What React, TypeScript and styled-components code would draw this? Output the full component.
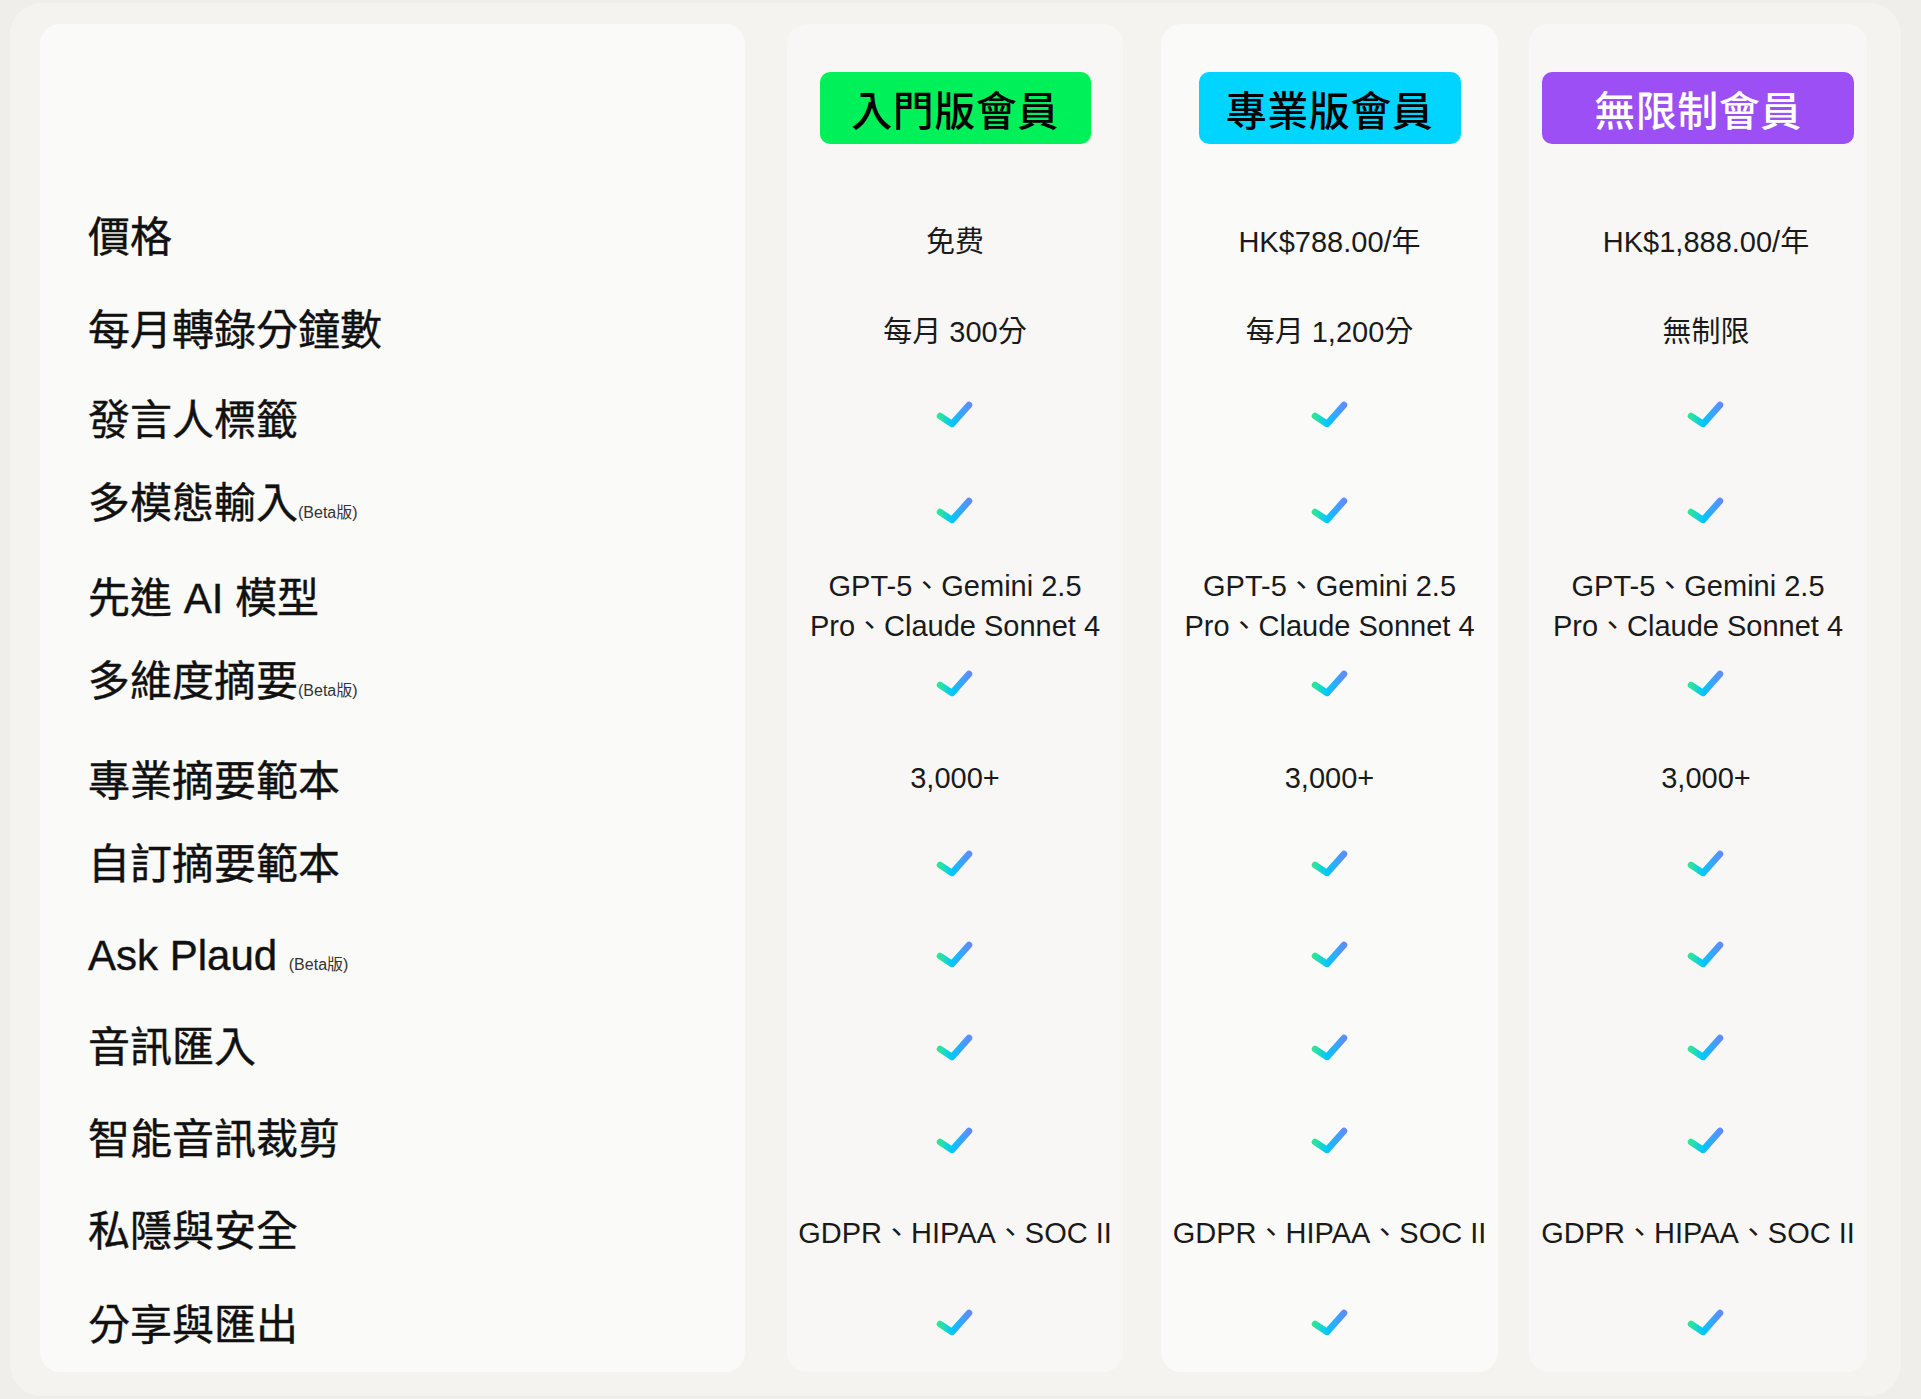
import { FC } from 'react'
import styled, { createGlobalStyle } from 'styled-components';

type Cell = 'check' | string | string[];

type Row = {
    label: string;
    beta?: 'tight' | 'spaced';
    labelHeight: number;
    labelNudge: number;
    valueHeight: number;
    valueNudge: number;
    values: [Cell, Cell, Cell];
};

const CHECK: Cell = 'check';
const AI: Cell = ['GPT-5、Gemini 2.5', 'Pro、Claude Sonnet 4'];
const SEC: Cell = 'GDPR、HIPAA、SOC II';

const rows: Row[] = [
    { label: '價格', labelHeight: 93, labelNudge: 3, valueHeight: 94, valueNudge: 3, values: ['免费', 'HK$788.00/年', 'HK$1,888.00/年'] },
    { label: '每月轉錄分鐘數', labelHeight: 92, labelNudge: 3, valueHeight: 87, valueNudge: 3, values: ['每月 300分', '每月 1,200分', '無制限'] },
    { label: '發言人標籤', labelHeight: 87, labelNudge: 4, valueHeight: 89, valueNudge: -4, values: [CHECK, CHECK, CHECK] },
    { label: '多模態輸入', beta: 'tight', labelHeight: 89, labelNudge: -1, valueHeight: 96, valueNudge: 0, values: [CHECK, CHECK, CHECK] },
    { label: '先進 AI 模型', labelHeight: 90, labelNudge: 4, valueHeight: 87, valueNudge: 0, values: [AI, AI, AI] },
    { label: '多維度摘要', beta: 'tight', labelHeight: 91, labelNudge: -3, valueHeight: 86, valueNudge: -5, values: [CHECK, CHECK, CHECK] },
    { label: '專業摘要範本', labelHeight: 90, labelNudge: 6, valueHeight: 89, valueNudge: 3, values: ['3,000+', '3,000+', '3,000+'] },
    { label: '自訂摘要範本', labelHeight: 88, labelNudge: 0, valueHeight: 88, valueNudge: -1, values: [CHECK, CHECK, CHECK] },
    { label: 'Ask Plaud', beta: 'spaced', labelHeight: 92, labelNudge: 1, valueHeight: 92, valueNudge: 0, values: [CHECK, CHECK, CHECK] },
    { label: '音訊匯入', labelHeight: 92, labelNudge: 1, valueHeight: 93, valueNudge: 0, values: [CHECK, CHECK, CHECK] },
    { label: '智能音訊裁剪', labelHeight: 92, labelNudge: 1, valueHeight: 94, valueNudge: 0, values: [CHECK, CHECK, CHECK] },
    { label: '私隱與安全', labelHeight: 92, labelNudge: 1, valueHeight: 91, valueNudge: 1, values: [SEC, SEC, SEC] },
    { label: '分享與匯出', labelHeight: 92, labelNudge: 3, valueHeight: 88, valueNudge: 0, values: [CHECK, CHECK, CHECK] },
];

const plans = [
    { name: '入門版會員', bg: '#00f05a', color: '#000', badgeWidth: 271, offset: 42, colWidth: 336, tone: '#f8f7f5', shift: 0 },
    { name: '專業版會員', bg: '#00d5ff', color: '#000', badgeWidth: 262, offset: 38, colWidth: 337, tone: '#fafaf8', shift: 0 },
    { name: '無限制會員', bg: '#9b4ff4', color: '#fff', badgeWidth: 312, offset: 31, colWidth: 338, tone: '#f8f7f5', shift: 8 },
];

const CheckMark: FC<{ id: string }> = ({ id }) => (
    <svg width="40" height="30" viewBox="0 0 40 30">
        <defs>
            <linearGradient id={id} x1="0" y1="0" x2="1" y2="0">
                <stop offset="0%" stopColor="#2fe39b" />
                <stop offset="40%" stopColor="#00c8ff" />
                <stop offset="100%" stopColor="#5f8cff" />
            </linearGradient>
        </defs>
        <polyline
            points="5,17 17,25 34,6"
            fill="none"
            stroke={`url(#${id})`}
            strokeWidth="6.5"
            strokeLinecap="round"
            strokeLinejoin="round"
        />
    </svg>
);

const App: FC = () => {
    return (
        <Page>
            <GlobalStyle />
            <Board>
                <LabelCard>
                    <LabelHead />
                    {rows.map((row) => (
                        <LabelRow key={row.label} $h={row.labelHeight} $dy={row.labelNudge}>
                            <LabelText>
                                {row.label}
                                {row.beta === 'spaced' && ' '}
                                {row.beta && <Beta>(Beta版)</Beta>}
                            </LabelText>
                        </LabelRow>
                    ))}
                </LabelCard>
                {plans.map((plan, pi) => (
                    <PlanCard key={plan.name} $offset={plan.offset} $w={plan.colWidth} $tone={plan.tone}>
                        <PlanHead>
                            <Badge $bg={plan.bg} $color={plan.color} $w={plan.badgeWidth}>{plan.name}</Badge>
                        </PlanHead>
                        {rows.map((row, ri) => {
                            const cell = row.values[pi];
                            const wide = Array.isArray(cell) || cell === SEC;
                            return (
                                <ValueRow
                                    key={row.label}
                                    $h={row.valueHeight}
                                    $dy={row.valueNudge}
                                    $dx={wide ? 0 : plan.shift}
                                >
                                    {cell === 'check' ? (
                                        <CheckMark id={`grad-${pi}-${ri}`} />
                                    ) : Array.isArray(cell) ? (
                                        <ValueText $multi>{cell.map((line) => <div key={line}>{line}</div>)}</ValueText>
                                    ) : (
                                        <ValueText>{cell}</ValueText>
                                    )}
                                </ValueRow>
                            );
                        })}
                    </PlanCard>
                ))}
            </Board>
        </Page>
    )
}

const GlobalStyle = createGlobalStyle`
    html, body {
        margin: 0;
        padding: 0;
        background: #efeeea;
    }
    body {
        font-family: "Liberation Sans", "Noto Sans CJK TC", sans-serif;
        color: #111;
    }
`;

const Page = styled.div`
    padding: 3px 20px 3px 10px;
`;

const Board = styled.div`
    display: flex;
    align-items: stretch;
    width: 1891px;
    box-sizing: border-box;
    padding: 21px 34px 24px 30px;
    background: #f4f3f0;
    border-radius: 32px;
`;

const LabelCard = styled.div`
    width: 705px;
    box-sizing: border-box;
    padding: 0 0 3px 48px;
    background: #fafaf8;
    border-radius: 20px;
    display: flex;
    flex-direction: column;
`;

const LabelHead = styled.div`
    height: 165px;
`;

const LabelRow = styled.div<{ $h: number; $dy: number }>`
    height: ${(p) => p.$h}px;
    box-sizing: border-box;
    padding-top: ${(p) => Math.max(0, p.$dy * 2)}px;
    padding-bottom: ${(p) => Math.max(0, -p.$dy * 2)}px;
    display: flex;
    align-items: center;
`;

const LabelText = styled.div`
    font-size: 42px;
    font-weight: 400;
    line-height: 1.2;
    color: #111;
    white-space: nowrap;
    -webkit-text-stroke: 0.4px #111;
`;

const Beta = styled.span`
    font-size: 16px;
    font-weight: 400;
    color: #333;
    -webkit-text-stroke: 0;
`;

const PlanCard = styled.div<{ $offset: number; $w: number; $tone: string }>`
    width: ${(p) => p.$w}px;
    margin-left: ${(p) => p.$offset}px;
    background: ${(p) => p.$tone};
    border-radius: 20px;
    display: flex;
    flex-direction: column;
    align-items: stretch;
`;

const PlanHead = styled.div`
    height: 168px;
    display: flex;
    justify-content: center;
    align-items: flex-start;
    padding-top: 48px;
    box-sizing: border-box;
`;

const Badge = styled.div<{ $bg: string; $color: string; $w: number }>`
    width: ${(p) => p.$w}px;
    height: 72px;
    border-radius: 10px;
    background: ${(p) => p.$bg};
    color: ${(p) => p.$color};
    display: flex;
    align-items: center;
    justify-content: center;
    font-size: 41px;
    font-weight: 500;
    letter-spacing: 0.5px;
`;

const ValueRow = styled.div<{ $h: number; $dy: number; $dx: number }>`
    height: ${(p) => p.$h}px;
    box-sizing: border-box;
    padding-top: ${(p) => Math.max(0, p.$dy * 2)}px;
    padding-bottom: ${(p) => Math.max(0, -p.$dy * 2)}px;
    padding-left: ${(p) => p.$dx * 2}px;
    display: flex;
    align-items: center;
    justify-content: center;
`;

const ValueText = styled.div<{ $multi?: boolean }>`
    font-size: 29px;
    line-height: ${(p) => (p.$multi ? '40px' : '1.2')};
    margin-top: ${(p) => (p.$multi ? '8px' : '0')};
    color: #1a1a1a;
    text-align: center;
    white-space: nowrap;
`;

export default App
